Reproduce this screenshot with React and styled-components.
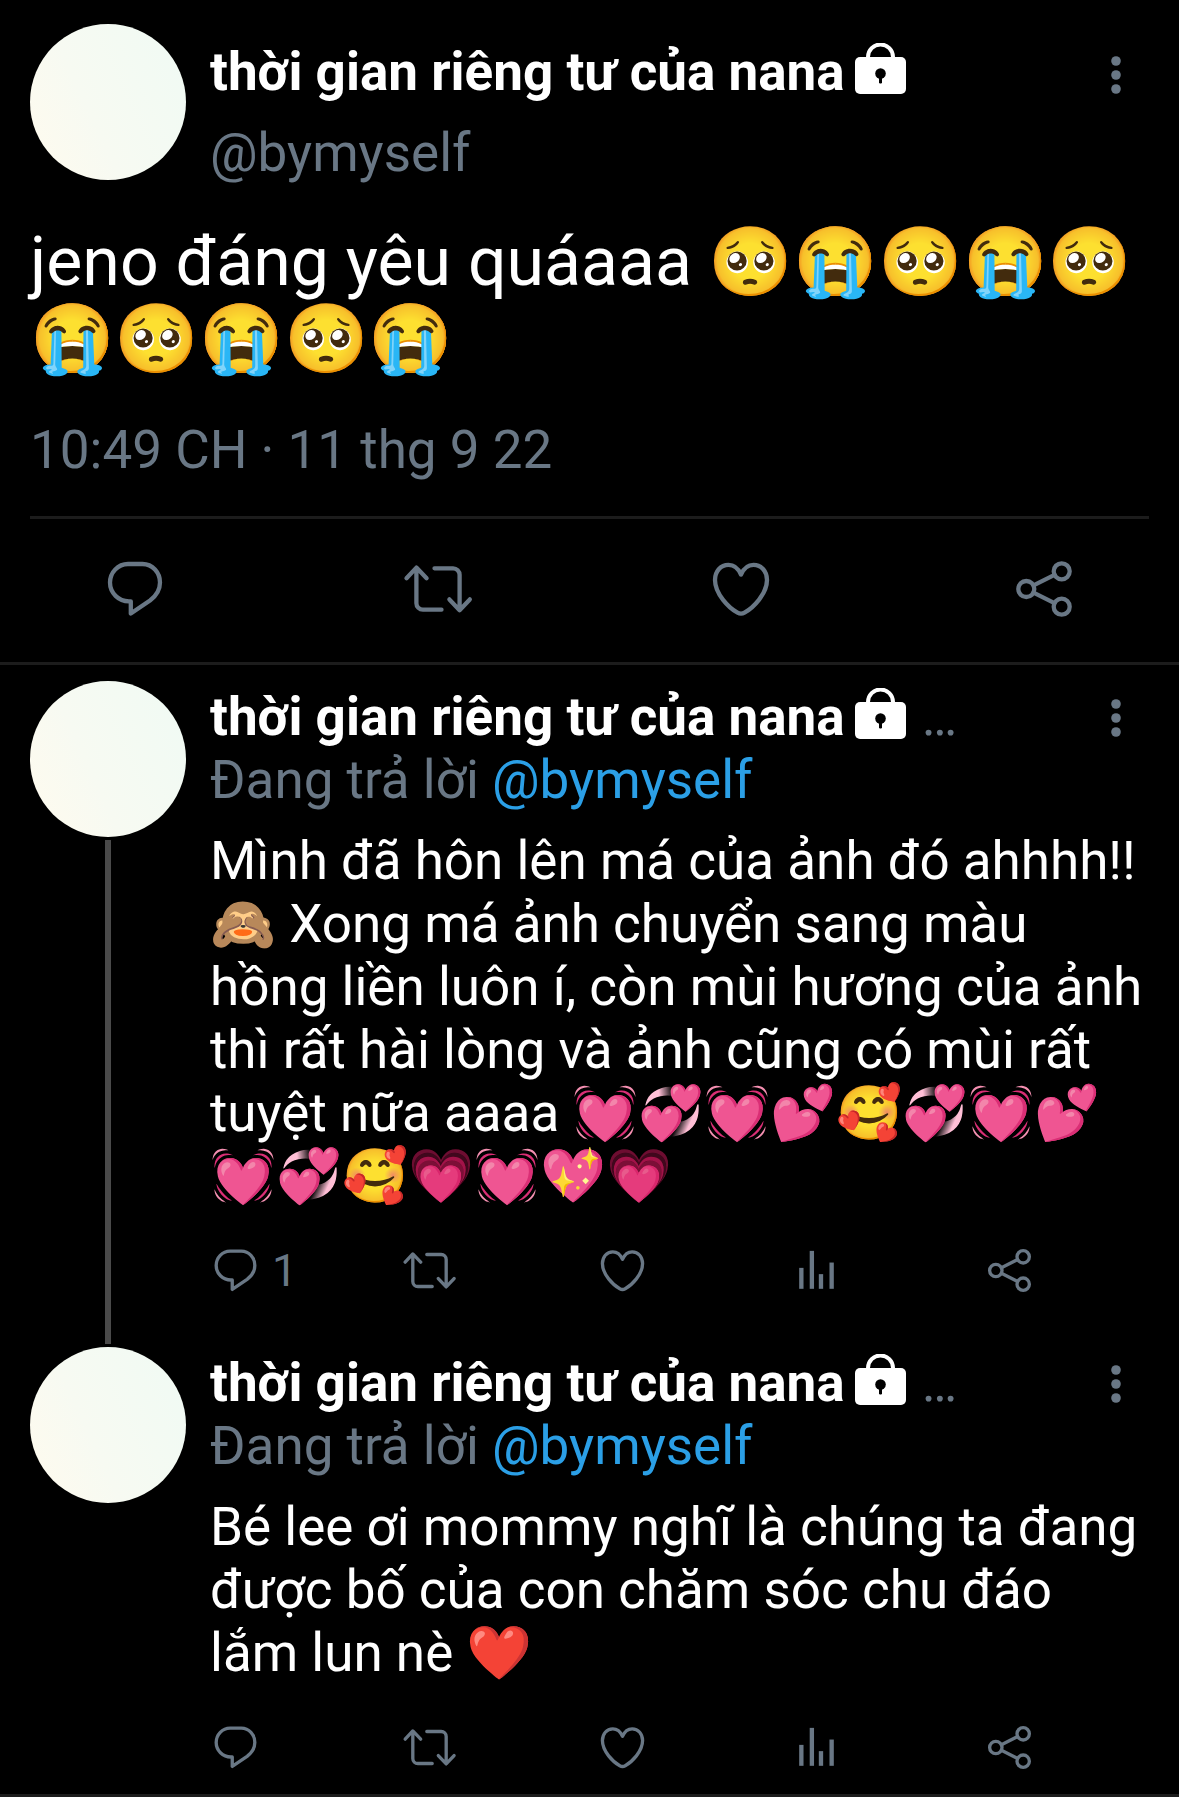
// Imports
import React from 'react';
import styled, {createGlobalStyle} from 'styled-components'


const GlobalStyle = createGlobalStyle`
    * {
        box-sizing: border-box;
    }
    body {
        margin: 0;
        background: #000;
        color: #fff;
        font-family: Roboto, 'Noto Color Emoji', sans-serif;
        font-size: 53px;
        line-height: 63px;
    }
    h2, p {
        margin: 0;
    }
`;

const Avatar = styled.div`
    flex: none;
    width: 156px;
    height: 156px;
    border-radius: 50%;
    background: linear-gradient(65deg, #fffbee 0%, #f7faf2 40%, #f0faf4 100%);
`;

const NameRow = styled.div`
    display: flex;
    align-items: center;
    height: 63px;
`;

const Name = styled.h2`
    font-size: inherit;
    font-weight: 700;
    white-space: nowrap;
`;

const LockSvg = styled.svg`
    flex: none;
    width: 51px;
    height: 51px;
    margin: 0 16px 8px 10px;
`;

const Muted = styled.span`
    color: #697785;
`;

const HandleLink = styled.a`
    color: ${({ $muted }) => ($muted ? '#697785' : '#2b9fe6')};
    text-decoration: none;
`;

const IconButton = styled.button`
    display: flex;
    align-items: center;
    gap: 11px;
    padding: 0;
    border: 0;
    background: none;
    color: #697785;
    font-family: inherit;
    font-size: 45px;
    line-height: 51px;
    cursor: pointer;
`;

const MoreButton = styled(IconButton)`
    flex: none;
    justify-content: center;
    width: 66px;
    height: 63px;
    margin-left: auto;
    margin-top: ${({ $top }) => $top || 0}px;
`;

const IconSvg = styled.svg`
    flex: none;
    width: ${({ $size }) => $size}px;
    height: ${({ $size }) => $size}px;
    overflow: visible;
    fill: none;
    stroke: currentColor;
    stroke-width: 4.3;
    stroke-linecap: round;
    stroke-linejoin: round;
`;

const MainTweet = styled.article`
    padding-top: 24px;
    border-bottom: 3px solid #1c1c1c;
`;

const MainContent = styled.div`
    padding: 0 30px;
`;

const Header = styled.div`
    display: flex;
    gap: 24px;
`;

const Author = styled.div`
    display: flex;
    flex-direction: column;
    gap: 18px;
    padding-top: 17px;
`;

const MainText = styled.p`
    margin-top: 39px;
    font-size: 68px;
    line-height: 77px;
`;

const Time = styled.p`
    margin-top: 41px;
    padding-bottom: 34px;
    border-bottom: 3px solid #1c1c1c;
    color: #697785;
`;

const MainActions = styled.div`
    display: grid;
    grid-template-columns: repeat(3, 1fr) 66px;
    padding: 37px 102px 40px;
`;

const Replies = styled.section`
    padding: 16px 30px 0;
    border-bottom: 3px solid #1c1c1c;
`;

const ReplyArticle = styled.article`
    display: flex;
    gap: 24px;
`;

const Side = styled.div`
    display: flex;
    flex-direction: column;
    align-items: center;
`;

const ThreadLine = styled.div`
    flex: 1;
    width: 6px;
    margin: 3px 0;
    background: #4a4a4a;
`;

const ReplyContent = styled.div`
    flex: 1;
    min-width: 0;
    padding-top: 5px;
    padding-bottom: ${({ $threaded }) => ($threaded ? 51 : 21)}px;
`;

const ReplyText = styled.p`
    margin-top: 18px;
`;

const ReplyActions = styled.div`
    display: grid;
    grid-template-columns: repeat(4, 1fr) 51px;
    margin-top: 37px;
    padding-right: 114px;
`;

// Icons
const icons = {
    reply: <path d="M26 8h14.5C50.5 8 58 16.5 58 26.5c0 8-4 13.5-10 18L28.8 57.5V45.3H27C16.5 45.3 8 37 8 26.6S16 8 26 8z" />,
    retweet: (
        <>
            <path d="M1.5 22.2 11.4 11.6l10.2 10.6M11.4 12v35.2a6.5 6.5 0 0 0 6.5 6.5h18.6" />
            <path d="M29.5 12.3h18.6a6.5 6.5 0 0 1 6.5 6.5V54M44.4 43.4 54.6 54.2l10.2-10.8" />
        </>
    ),
    like: <path d="M33 18.5C30.5 13 26 8.9 20.5 8.9 12.5 8.9 7 15.5 7 24c0 14 14 28 22.5 32.6 2.5 1.4 4.5 1.4 7 0C45 52 59 38 59 24c0-8.5-5.5-15.1-13.5-15.1C40 8.9 35.5 13 33 18.5z" />,
    stats: (
        <g fill="currentColor" stroke="none">
            <rect x="10.6" y="29.6" width="5.6" height="27.1" />
            <rect x="24.2" y="7.6" width="5.6" height="49.1" />
            <rect x="36" y="37.7" width="5.6" height="19" />
            <rect x="49.8" y="22.7" width="5.6" height="34" />
        </g>
    ),
    share: (
        <>
            <circle cx="15.3" cy="33" r="8" />
            <circle cx="50.7" cy="15.3" r="8" />
            <circle cx="50.7" cy="50.7" r="8" />
            <path d="m22.5 29.4 21-10.5M22.5 36.6l21 10.5" />
        </>
    ),
    more: (
        <g fill="currentColor" stroke="none">
            <circle cx="33" cy="19" r="4.8" />
            <circle cx="33" cy="33" r="4.8" />
            <circle cx="33" cy="47" r="4.8" />
        </g>
    ),
};

function Icon ({ name, size }) {
    return (
        <IconSvg viewBox="0 0 66 66" $size={size} aria-hidden="true">
            {icons[name]}
        </IconSvg>
    )
}

function Lock () {
    return (
        <LockSvg viewBox="0 0 51 51" aria-hidden="true">
            <path d="M13 17v-3a12.5 12.5 0 0 1 25 0v3" fill="none" stroke="#fff" strokeWidth="4" />
            <rect y="14" width="51" height="37" rx="5" fill="#fff" />
            <circle cx="25.5" cy="30.5" r="5.3" />
            <path d="M24.5 33h2v7h-2z" stroke="#000" strokeLinejoin="round" />
        </LockSvg>
    )
}

function Action ({ name, label, size, count }) {
    return (
        <IconButton type="button" aria-label={label}>
            <Icon name={name} size={size} />
            {count}
        </IconButton>
    )
}

function Reply ({ text, count, threaded }) {
    return (
        <ReplyArticle>
            <Side>
                <Avatar />
                {threaded && <ThreadLine />}
            </Side>
            <ReplyContent $threaded={threaded}>
                <NameRow>
                    <Name>thời gian riêng tư của nana</Name>
                    <Lock />
                    <Muted>…</Muted>
                    <MoreButton type="button" aria-label="Thêm">
                        <Icon name="more" size={66} />
                    </MoreButton>
                </NameRow>
                <p>
                    <Muted>Đang trả lời </Muted>
                    <HandleLink href="#bymyself">@bymyself</HandleLink>
                </p>
                <ReplyText>{text}</ReplyText>
                <ReplyActions>
                    <Action name="reply" label="Trả lời" size={51} count={count} />
                    <Action name="retweet" label="Tweet lại" size={51} />
                    <Action name="like" label="Thích" size={51} />
                    <Action name="stats" label="Thống kê" size={51} />
                    <Action name="share" label="Chia sẻ" size={51} />
                </ReplyActions>
            </ReplyContent>
        </ReplyArticle>
    )
}

// Body
export default function App () {
    return (
        <main>
            <GlobalStyle />
            <MainTweet>
                <MainContent>
                    <Header>
                        <Avatar />
                        <Author>
                            <NameRow>
                                <Name>thời gian riêng tư của nana</Name>
                                <Lock />
                            </NameRow>
                            <HandleLink href="#bymyself" $muted>@bymyself</HandleLink>
                        </Author>
                        <MoreButton type="button" aria-label="Thêm" $top={19}>
                            <Icon name="more" size={66} />
                        </MoreButton>
                    </Header>
                    <MainText>jeno đáng yêu quáaaa 🥺😭🥺😭🥺😭🥺😭🥺😭</MainText>
                    <Time>10:49 CH · 11 thg 9 22</Time>
                </MainContent>
                <MainActions>
                    <Action name="reply" label="Trả lời" size={66} />
                    <Action name="retweet" label="Tweet lại" size={66} />
                    <Action name="like" label="Thích" size={66} />
                    <Action name="share" label="Chia sẻ" size={66} />
                </MainActions>
            </MainTweet>
            <Replies>
                <Reply
                    threaded
                    count={1}
                    text="Mình đã hôn lên má của ảnh đó ahhhh!! 🙈 Xong má ảnh chuyển sang màu hồng liền luôn í, còn mùi hương của ảnh thì rất hài lòng và ảnh cũng có mùi rất tuyệt nữa aaaa 💓💞💓💕🥰💞💓💕💓💞🥰💗💓💖💗"
                />
                <Reply text="Bé lee ơi mommy nghĩ là chúng ta đang được bố của con chăm sóc chu đáo lắm lun nè ❤️" />
            </Replies>
        </main>
    )
}
